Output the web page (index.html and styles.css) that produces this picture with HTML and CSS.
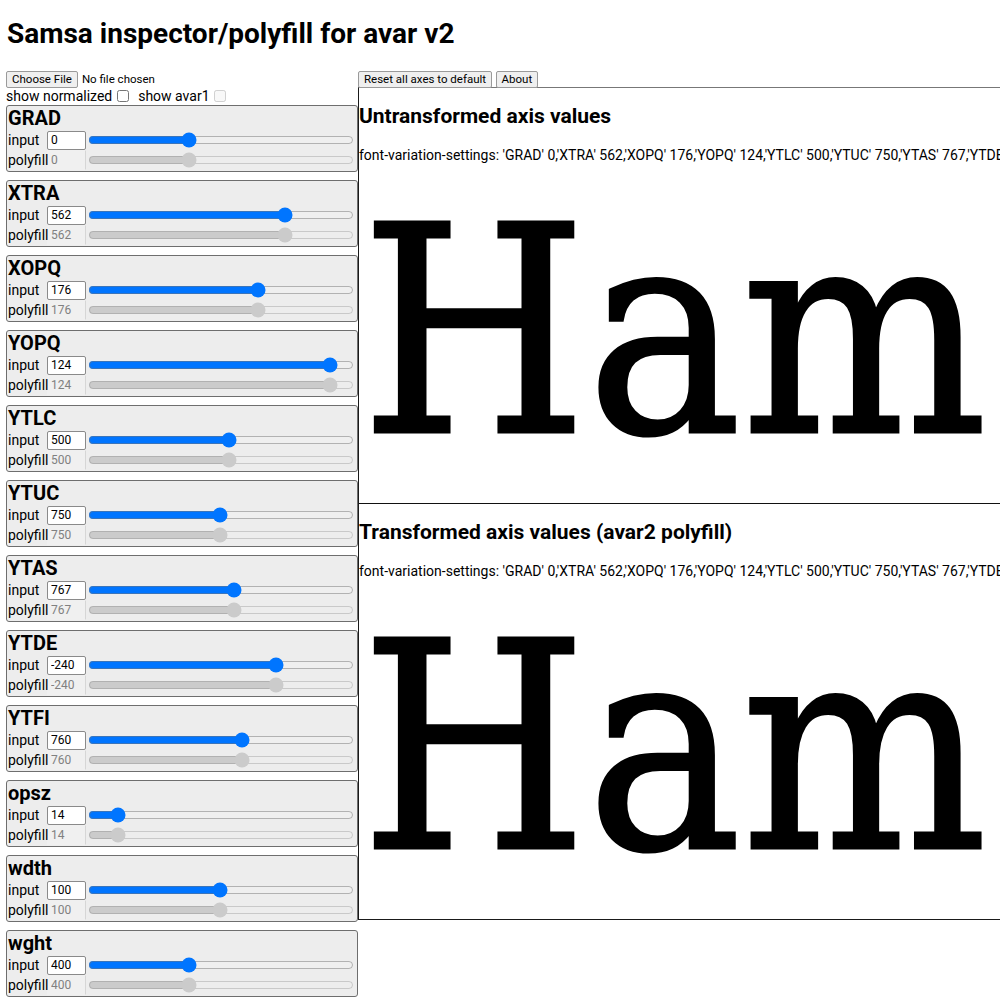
FILE: index.html
```html
<!DOCTYPE html>
<html lang="en">
<head>
    <meta charset="UTF-8">
    <meta name="viewport" content="width=device-width, initial-scale=1.0">
    <title>Samsa inspector/polyfill for avar v2</title>
    <link rel="stylesheet" href="styles.css">
</head>
<body>
    <h1>Samsa inspector/polyfill for avar v2</h1>

    <div class="layout">
        <div class="controls">
            <div class="file-row">
                <input type="file" id="font-file">
            </div>
            <div class="toggles">
                <label>show normalized <input type="checkbox" id="show-normalized"></label>
                <label class="off">show avar1 <input type="checkbox" id="show-avar1" disabled></label>
            </div>

            <div class="axis">
                <h3>GRAD</h3>
                <div class="row"><label>input</label><input class="val" type="text" value="0"><input type="range" min="0" max="1000" value="372"></div>
                <div class="row"><label>polyfill</label><input class="val out" type="text" value="0" disabled><input type="range" min="0" max="1000" value="372" disabled></div>
            </div>
            <div class="axis">
                <h3>XTRA</h3>
                <div class="row"><label>input</label><input class="val" type="text" value="562"><input type="range" min="0" max="1000" value="756"></div>
                <div class="row"><label>polyfill</label><input class="val out" type="text" value="562" disabled><input type="range" min="0" max="1000" value="756" disabled></div>
            </div>
            <div class="axis">
                <h3>XOPQ</h3>
                <div class="row"><label>input</label><input class="val" type="text" value="176"><input type="range" min="0" max="1000" value="648"></div>
                <div class="row"><label>polyfill</label><input class="val out" type="text" value="176" disabled><input type="range" min="0" max="1000" value="648" disabled></div>
            </div>
            <div class="axis">
                <h3>YOPQ</h3>
                <div class="row"><label>input</label><input class="val" type="text" value="124"><input type="range" min="0" max="1000" value="936"></div>
                <div class="row"><label>polyfill</label><input class="val out" type="text" value="124" disabled><input type="range" min="0" max="1000" value="936" disabled></div>
            </div>
            <div class="axis">
                <h3>YTLC</h3>
                <div class="row"><label>input</label><input class="val" type="text" value="500"><input type="range" min="0" max="1000" value="532"></div>
                <div class="row"><label>polyfill</label><input class="val out" type="text" value="500" disabled><input type="range" min="0" max="1000" value="532" disabled></div>
            </div>
            <div class="axis">
                <h3>YTUC</h3>
                <div class="row"><label>input</label><input class="val" type="text" value="750"><input type="range" min="0" max="1000" value="496"></div>
                <div class="row"><label>polyfill</label><input class="val out" type="text" value="750" disabled><input type="range" min="0" max="1000" value="496" disabled></div>
            </div>
            <div class="axis">
                <h3>YTAS</h3>
                <div class="row"><label>input</label><input class="val" type="text" value="767"><input type="range" min="0" max="1000" value="552"></div>
                <div class="row"><label>polyfill</label><input class="val out" type="text" value="767" disabled><input type="range" min="0" max="1000" value="552" disabled></div>
            </div>
            <div class="axis">
                <h3>YTDE</h3>
                <div class="row"><label>input</label><input class="val" type="text" value="-240"><input type="range" min="0" max="1000" value="720"></div>
                <div class="row"><label>polyfill</label><input class="val out" type="text" value="-240" disabled><input type="range" min="0" max="1000" value="720" disabled></div>
            </div>
            <div class="axis">
                <h3>YTFI</h3>
                <div class="row"><label>input</label><input class="val" type="text" value="760"><input type="range" min="0" max="1000" value="584"></div>
                <div class="row"><label>polyfill</label><input class="val out" type="text" value="760" disabled><input type="range" min="0" max="1000" value="584" disabled></div>
            </div>
            <div class="axis">
                <h3>opsz</h3>
                <div class="row"><label>input</label><input class="val" type="text" value="14"><input type="range" min="0" max="1000" value="88"></div>
                <div class="row"><label>polyfill</label><input class="val out" type="text" value="14" disabled><input type="range" min="0" max="1000" value="88" disabled></div>
            </div>
            <div class="axis">
                <h3>wdth</h3>
                <div class="row"><label>input</label><input class="val" type="text" value="100"><input type="range" min="0" max="1000" value="496"></div>
                <div class="row"><label>polyfill</label><input class="val out" type="text" value="100" disabled><input type="range" min="0" max="1000" value="496" disabled></div>
            </div>
            <div class="axis">
                <h3>wght</h3>
                <div class="row"><label>input</label><input class="val" type="text" value="400"><input type="range" min="0" max="1000" value="372"></div>
                <div class="row"><label>polyfill</label><input class="val out" type="text" value="400" disabled><input type="range" min="0" max="1000" value="372" disabled></div>
            </div>
        </div>

        <div class="preview">
            <div class="actions">
                <button class="btn">Reset all axes to default</button>
                <button class="btn">About</button>
            </div>
            <div class="view">
                <div class="pane">
                    <h2>Untransformed axis values</h2>
                    <p class="fvs">font-variation-settings: 'GRAD' 0,'XTRA' 562,'XOPQ' 176,'YOPQ' 124,'YTLC' 500,'YTUC' 750,'YTAS' 767,'YTDE' -240,'YTFI' 760,'opsz' 14,'wdth' 100,'wght' 400</p>
                    <div class="sample">Ham</div>
                </div>
                <div class="pane">
                    <h2>Transformed axis values (avar2 polyfill)</h2>
                    <p class="fvs">font-variation-settings: 'GRAD' 0,'XTRA' 562,'XOPQ' 176,'YOPQ' 124,'YTLC' 500,'YTUC' 750,'YTAS' 767,'YTDE' -240,'YTFI' 760,'opsz' 14,'wdth' 100,'wght' 400</p>
                    <div class="sample">Ham</div>
                </div>
            </div>
        </div>
    </div>
</body>
</html>
```

FILE: styles.css
```css
body {
    margin: 0;
    padding: 0 0 0 6px;
    font-family: Roboto, "Noto Sans", Arial, sans-serif;
    font-size: 14px;
    color: #000;
    overflow: hidden;
}
h1 {
    font-size: 28px;
    line-height: 36px;
    margin: 16px 0 18px 1px;
}
.layout {
    display: grid;
    grid-template-columns: 352px 1fr;
}

/* left column */
.file-row {
    height: 18px;
    display: flex;
    align-items: center;
}
input[type=file] {
    font: 11.5px Roboto, Arial, sans-serif;
}
input[type=file]::file-selector-button,
.btn {
    font: 11.5px Roboto, Arial, sans-serif;
    height: 17px;
    padding: 0 5px;
    margin: 0 4px 0 0;
    background: #efefef;
    border: 1px solid #9a9a9a;
    border-radius: 2px;
    color: #000;
    line-height: 15px;
}
.toggles {
    height: 17px;
    line-height: 17px;
}
.toggles label {
    margin-right: 6px;
}
.toggles input {
    width: 12px;
    height: 12px;
    margin: 0 0 0 1px;
    vertical-align: -1px;
}
.axis {
    box-sizing: border-box;
    height: 67px;
    margin-bottom: 8px;
    padding: 0 1px;
    background: #ededed;
    border: 1px solid #6e6e6e;
    border-radius: 3px;
}
.axis h3 {
    font-size: 20px;
    line-height: 24px;
    margin: 0;
}
.row {
    display: grid;
    grid-template-columns: 39px 39px 1fr;
    align-items: center;
    height: 20px;
}
.row label {
    line-height: 20px;
    white-space: nowrap;
    position: relative;
    z-index: 1;
}
.val {
    box-sizing: border-box;
    width: 39px;
    height: 19px;
    margin: 0;
    padding: 0 3px;
    font: 12px Roboto, Arial, sans-serif;
    background: #fff;
    border: 1px solid #8a8a8a;
    border-radius: 2px;
}
.val.out {
    height: 20px;
    color: #808080;
    background: #f0f0f0;
    border-color: transparent #d6d6d6 transparent transparent;
    border-radius: 0;
}
.row input[type=range] {
    width: auto;
    height: 16px;
    margin: 0 2px 0 2px;
}

/* right column */
.preview {
    overflow: hidden;
}
.actions {
    height: 17px;
    white-space: nowrap;
}
.btn {
    margin: 0;
}
.view {
    width: 1400px;
    border: 1px solid #1a1a1a;
    border-top-color: #777;
    white-space: nowrap;
}
.pane {
    height: 415px;
    overflow: hidden;
}
.pane + .pane {
    border-top: 1px solid #111;
}
.pane h2 {
    font-size: 21px;
    line-height: 26px;
    margin: 15px 0 0 0;
}
.fvs {
    font-size: 14px;
    line-height: 18px;
    margin: 17px 0 0 0;
}
.sample {
    font-family: "DejaVu Serif", serif;
    font-stretch: condensed;
    font-size: 288px;
    line-height: 290px;
    margin-top: 24px;
    padding-left: 2px;
    -webkit-text-stroke: 3px #000;
}
```
